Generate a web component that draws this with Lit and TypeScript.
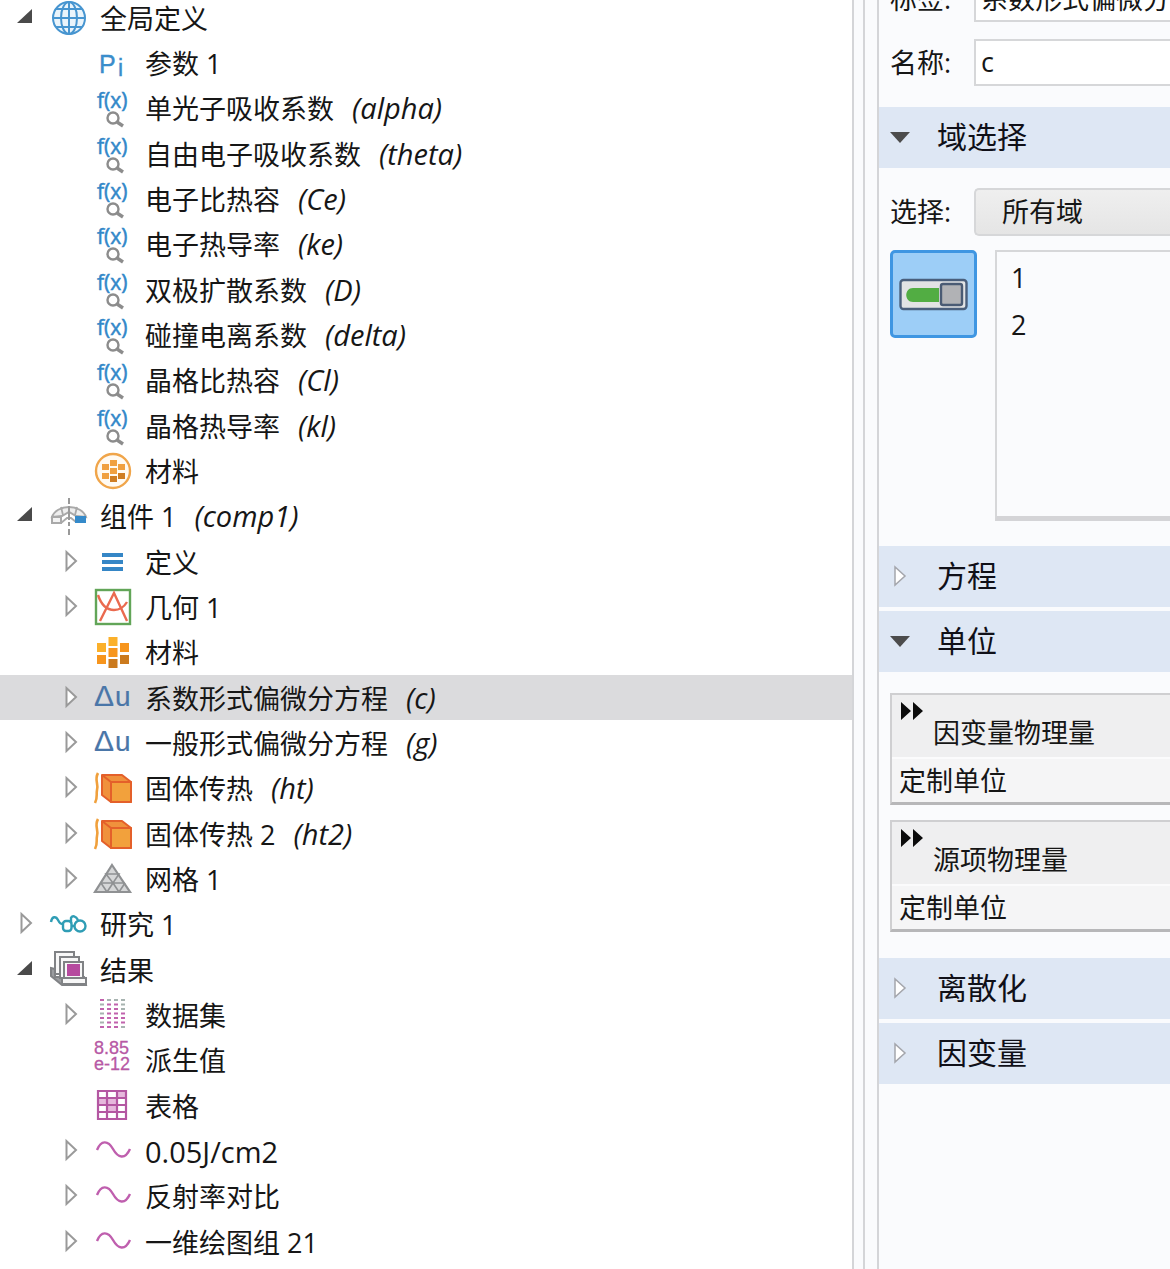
import { LitElement, html, svg, css, nothing, SVGTemplateResult } from "lit";
import { customElement, property, state } from "lit/decorators.js";
import { classMap } from "lit/directives/class-map.js";

interface TreeNode {
  icon: string;
  label: string;
  tag?: string;
  level: 0 | 1;
  expand?: "open" | "closed";
  latin?: boolean;
}

const NODES: TreeNode[] = [
  { level: 0, expand: "open", icon: "globe", label: "全局定义" },
  { level: 1, icon: "param", label: "参数 1" },
  { level: 1, icon: "func", label: "单光子吸收系数", tag: "(alpha)" },
  { level: 1, icon: "func", label: "自由电子吸收系数", tag: "(theta)" },
  { level: 1, icon: "func", label: "电子比热容", tag: "(Ce)" },
  { level: 1, icon: "func", label: "电子热导率", tag: "(ke)" },
  { level: 1, icon: "func", label: "双极扩散系数", tag: "(D)" },
  { level: 1, icon: "func", label: "碰撞电离系数", tag: "(delta)" },
  { level: 1, icon: "func", label: "晶格比热容", tag: "(Cl)" },
  { level: 1, icon: "func", label: "晶格热导率", tag: "(kl)" },
  { level: 1, icon: "materialsGlobal", label: "材料" },
  { level: 0, expand: "open", icon: "component", label: "组件 1", tag: "(comp1)" },
  { level: 1, expand: "closed", icon: "definitions", label: "定义" },
  { level: 1, expand: "closed", icon: "geometry", label: "几何 1" },
  { level: 1, icon: "materials", label: "材料" },
  { level: 1, expand: "closed", icon: "pde", label: "系数形式偏微分方程", tag: "(c)" },
  { level: 1, expand: "closed", icon: "pde", label: "一般形式偏微分方程", tag: "(g)" },
  { level: 1, expand: "closed", icon: "heat", label: "固体传热", tag: "(ht)" },
  { level: 1, expand: "closed", icon: "heat", label: "固体传热 2", tag: "(ht2)" },
  { level: 1, expand: "closed", icon: "mesh", label: "网格 1" },
  { level: 0, expand: "closed", icon: "study", label: "研究 1" },
  { level: 0, expand: "open", icon: "results", label: "结果" },
  { level: 1, expand: "closed", icon: "datasets", label: "数据集" },
  { level: 1, icon: "derived", label: "派生值" },
  { level: 1, icon: "table", label: "表格" },
  { level: 1, expand: "closed", icon: "plot", label: "0.05J/cm2", latin: true },
  { level: 1, expand: "closed", icon: "plot", label: "反射率对比" },
  { level: 1, expand: "closed", icon: "plot", label: "一维绘图组 21" },
];

const DATASET_COLS = [7, 14, 21, 28];
const DATASET_ROWS = [0, 1, 2, 3, 4, 5, 6];
const DATASET_PINK = ["1000", "0110", "1110", "0111", "1111", "0111", "1110"];

const ICONS: Record<string, SVGTemplateResult> = {
  globe: svg`<g fill="none" stroke="#4795d0" stroke-width="2">
    <circle cx="21" cy="23" r="16" fill="#eaf4fb"/>
    <ellipse cx="21" cy="23" rx="8" ry="16"/>
    <path d="M21 7V39M5 23H37M8 14H34M8 32H34"/></g>`,
  param: svg`<g fill="#3a8dcb" stroke="#3a8dcb" stroke-width=".4"><text x="6" y="33" font-size="25">P</text><text x="25" y="36" font-size="23">i</text></g>`,
  func: svg`<text class="formula" x="4" y="23" font-size="21" fill="#3288c9" stroke="#3288c9" stroke-width=".5">f(x)</text>
    <circle cx="20" cy="33" r="5.5" fill="#fff" stroke="#8c8c8c" stroke-width="2.4"/>
    <path d="M24 37L30 41" stroke="#8c8c8c" stroke-width="3.4"/>`,
  materialsGlobal: svg`<circle cx="20" cy="23" r="17" fill="#fffaf2" stroke="#f0a54a" stroke-width="2.4"/>
    <g fill="#f0a040"><path d="M17 12h7v6h-7zM9 16h7v6H9zM25 16h7v6h-7zM17 20h7v6h-7zM9 25h7v6H9z"/>
    <path fill="#cf7d22" d="M17 28h7v6h-7zM25 25h7v6h-7z"/></g>`,
  component: svg`<path d="M4 24C6 18 13 14 21 14S36 18 38 24L28 23L21 19L14 23Z" fill="#eee" stroke="#a9a9a9" stroke-width="2"/>
    <path d="M4 24h9v6H4z" fill="#f3f3f3" stroke="#a9a9a9" stroke-width="2"/>
    <path d="M13 14L15 22M29 14L27 22M13 30L19 25H23L28 29" fill="none" stroke="#a9a9a9" stroke-width="1.8"/>
    <path d="M27 23h11v7H27z" fill="#358aca"/>
    <path d="M21 5v6M21 13v14M21 29v4M21 36v6" stroke="#999" stroke-width="2"/>`,
  definitions: svg`<path d="M9 14h21v4H9zM9 21h21v4H9zM9 28h21v4H9z" fill="#3586c6"/>`,
  geometry: svg`<rect x="3" y="6" width="34" height="34" fill="#fff" stroke="#62a558" stroke-width="2.4"/>
    <g fill="none" stroke="#ea6a4f" stroke-width="2.4"><path d="M7 37L21 9L34 37"/>
    <path d="M5 11C8 20 13 26 21 26C27 26 31 23 34 18"/></g>`,
  materials: svg`<g fill="#f7951d"><path fill="#fbb02a" d="M15.500 8h9v9h-9zM4 14h9v9H4z"/>
    <path d="M27 14h9v9h-9zM15.500 19h9v9h-9zM4 26h9v9H4z"/>
    <path fill="#cb7a1e" d="M27 26h9v9h-9zM15.500 30h9v9h-9z"/></g>`,
  pde: svg`<g fill="#4a76a8" stroke="#4a76a8" stroke-width=".2"><text x="1" y="31" font-size="30">Δ</text><text x="22" y="31" font-size="28">u</text></g>`,
  heat: svg`<g stroke="#e4602a" stroke-width="2" stroke-linejoin="round">
    <path d="M9 10H29L38 17V37H18L9 30Z" fill="#f0913c"/><path d="M18 17H38V37H18Z" fill="#f2a13c"/><path d="M9 10L18 17" fill="none"/></g>
    <path d="M5 8C1 15 6 19 4 25C3 30 5 32 2 38" fill="none" stroke="#f0a03c" stroke-width="2.6"/>`,
  mesh: svg`<path d="M19 9L37 36H2Z" fill="#d6d7d8" stroke="#8f9193" stroke-width="2.2"/>
    <g fill="none" stroke="#8f9193" stroke-width="1.6"><path d="M13 18H26L20 27ZM7 27H32M14 36L20 27L26 36M8 27L14 36M32 27L26 36"/></g>`,
  study: svg`<g fill="none" stroke="#2f9db5" stroke-width="2.4"><path d="M3 21C4 15 8 15 10 19S13 23 16 23M23 22V17C24 14 28 15 30 19M23 25h4"/>
    <rect x="15" y="20" width="8.500" height="10" rx="3"/><circle cx="32" cy="25" r="5.5"/></g>`,
  results: svg`<g fill="#f7f7f7" stroke="#808285" stroke-width="2">
    <path d="M3 21L7 22V30H36L38 38H14L3 29Z" fill="#9b9da0"/>
    <path d="M7 5H26V27H7Z"/><path d="M12 10H31V31H12Z"/><path d="M16 15H35V32H16Z"/>
    <path d="M14 31H38V37H14Z"/></g><path d="M19 17H32V29H19Z" fill="#b64a9f"/>`,
  datasets: svg`${DATASET_ROWS.map((r) =>
    DATASET_COLS.map(
      (x, c) => svg`<rect x=${x} y=${7 + r * 4.5} width="4" height="2" fill=${DATASET_PINK[r][c] === "1" ? "#c163ad" : "#a7b3b0"}/>`
    )
  )}`,
  derived: svg`<g fill="#b759a5" stroke="#b759a5" stroke-width=".3"><text x="1" y="17" font-size="18">8.85</text><text x="1" y="33" font-size="18">e-12</text></g>`,
  table: svg`<path d="M5 8H33V36H5Z" fill="#fff"/><path d="M24 8h9v7h-9zM5 15h9v7H5zM14 15h10v14H14z" fill="#e6b8dc"/>
    <path d="M5 8H33V36H5ZM14 8V36M24 8V36M5 15H33M5 22H33M5 29H33" fill="none" stroke="#b457a2" stroke-width="2.2"/>`,
  plot: svg`<path d="M4 22C8 12 15 12 20 21S32 32 37 21" fill="none" stroke="#bf5fae" stroke-width="2.4"/>`,
};

@customElement("model-tree")
class ModelTree extends LitElement {
  @state() private selected = 15;

  static styles = css`
    :host { display: block; overflow: hidden; }
    .tree { list-style: none; margin: -5px 0 0; padding: 0; }
    .row {
      display: flex; align-items: flex-start; height: 45px; padding-left: 14px;
      box-sizing: border-box; white-space: nowrap; cursor: default;
    }
    .row:nth-child(3n) { height: 46px; }
    .row.child { padding-left: 59px; }
    .row.selected { background: #dbdbdd; }
    .expander {
      width: 22px; height: 44px; margin-right: 12px; padding: 0; border: 0;
      background: none; flex: none; display: block;
    }
    .arrow { display: block; }
    .icon { flex: none; width: 40px; height: 44px; margin-right: 12px; overflow: visible; font-family: "Liberation Sans", sans-serif; }
    .formula { font-family: "Open Sans", sans-serif; }
    .label { line-height: 48px; }
    .label.latin { font-size: 29px; }
    .tag { font-size: 29px; font-style: italic; margin-left: 18px; line-height: 46px; }
  `;

  private expander(node: TreeNode) {
    if (!node.expand) return html`<span class="expander"></span>`;
    return html`<button class="expander" tabindex="-1" aria-label=${node.label}>
      <svg class="arrow" width="22" height="44" viewBox="0 0 22 44" aria-hidden="true">
        ${node.expand === "open"
          ? svg`<path d="M18 14V28H3Z" fill="#4a4a4a"/>`
          : svg`<path d="M7.500 13V31L17 22Z" fill="#fff" stroke="#9a9a9a" stroke-width="2"/>`}
      </svg>
    </button>`;
  }

  render() {
    return html`<ul class="tree" role="tree">
      ${NODES.map(
        (n, i) => html`<li
          class=${classMap({ row: true, child: n.level === 1, selected: i === this.selected })}
          role="treeitem"
          aria-level=${n.level + 1}
          aria-selected=${i === this.selected}
          @click=${() => (this.selected = i)}
        >${this.expander(n)}<svg class="icon" viewBox="0 0 40 44" aria-hidden="true">${ICONS[n.icon]}</svg><span
            class=${classMap({ label: true, latin: !!n.latin })}>${n.label}</span>${n.tag
            ? html`<span class="tag">${n.tag}</span>`
            : nothing}</li>`
      )}
    </ul>`;
  }
}

@customElement("settings-section")
class SettingsSection extends LitElement {
  @property() heading = "";
  @property({ type: Boolean }) open = false;

  static styles = css`
    :host { display: block; }
    .head {
      display: flex; align-items: center; width: 100%; height: 61px; padding: 0 0 2px 10px;
      border: 0; background: #dee7f4; font: inherit; font-size: 30px; line-height: 44px;
      color: #101018; text-align: left; white-space: nowrap;
    }
    .mark { flex: none; margin-right: 26px; }
  `;

  render() {
    return html`<button class="head" aria-expanded=${this.open} @click=${() => (this.open = !this.open)}>
        <svg class="mark" width="22" height="24" viewBox="0 0 22 24" aria-hidden="true">
          ${this.open
            ? svg`<path d="M1 7H21L11 18Z" fill="#4c4c4c"/>`
            : svg`<path d="M6 3V21L16 12Z" fill="#fff" stroke="#a4a6ac" stroke-width="1.500"/>`}
        </svg>
        <span>${this.heading}</span>
      </button>
      ${this.open ? html`<slot></slot>` : nothing}`;
  }
}

@customElement("app-root")
class AppRoot extends LitElement {
  static styles = css`
    :host {
      display: flex; height: 100vh; overflow: hidden; background: #fafbfd; color: #161616;
      font-family: "Open Sans", "Noto Sans CJK SC", sans-serif; font-size: 27px; line-height: 40px;
    }
    .model { flex: 0 0 73%; box-sizing: border-box; border-right: 2px solid #d4d5d8; background: #fff; }
    .splitter { flex: none; width: 9px; margin-right: 12px; border-right: 2px solid #d4d5d8; }
    .settings { flex: 1; min-width: 0; overflow: hidden; border-left: 2px solid #d4d5d8; }
    .identity { display: grid; gap: 17px; margin-top: -25px; padding: 0 0 21px 11px; }
    .field { display: flex; align-items: center; white-space: nowrap; }
    .name { flex: none; width: 84px; }
    .text, .choice {
      flex: 1; min-width: 0; height: 47px; box-sizing: border-box; margin: 0; border: 2px solid #d6d7d9;
      border-right: 0; border-radius: 0; background: #fff; color: inherit; font: inherit; outline: none;
    }
    .text { padding: 0 0 2px 5px; }
    .choice {
      appearance: none; height: 48px; padding: 0 0 0 26px; border-radius: 5px 0 0 5px;
      background: linear-gradient(#efefef, #e5e5e5);
    }
    .domain { padding: 20px 0 25px 11px; }
    .picker { display: flex; align-items: flex-start; gap: 18px; margin-top: 14px; }
    .toggle {
      flex: none; width: 87px; height: 88px; padding: 0; border: 3px solid #3f96e2; border-radius: 5px;
      background: #9dcef7; display: grid; place-items: center;
    }
    .domains {
      flex: 1; list-style: none; margin: 0; padding: 2px 0 0 14px; height: 271px; box-sizing: border-box;
      border: 2px solid #d6d7d9; border-right: 0; border-bottom: 5px solid #d4d4d7;
    }
    .domains li { height: 47px; line-height: 47px; }
    .gap { margin-top: 4px; }
    .units { display: grid; gap: 15px; padding: 21px 0 26px 11px; }
    .unit {
      width: 100%; border-collapse: separate; border-spacing: 0; border: 2px solid #cfcfd1; border-right: 0;
      border-bottom: 3px solid #b7b7b9; background: #f5f5f6; font-weight: 400; text-align: left;
      white-space: nowrap; table-layout: fixed;
    }
    .unit th { padding: 0; height: 64px; box-sizing: border-box; font-weight: 400; background: #efeff0; border-bottom: 2px solid #fbfbfc; vertical-align: top; }
    .unit td { padding: 0 0 0 7px; height: 43px; box-sizing: border-box; }
    .quantity { display: flex; align-items: flex-start; gap: 10px; padding: 7px 0 0 9px; height: 55px; box-sizing: border-box; }
    .quantity span { padding-top: 13px; line-height: 36px; }
  `;

  private unit(quantity: string, value: string) {
    return html`<table class="unit">
      <tr><th scope="col"><div class="quantity">
        <svg width="22" height="19" viewBox="0 0 22 19" aria-hidden="true"><path d="M0 0L10 9L0 18ZM12 0L22 9L12 18Z" fill="#0c0c0c"/></svg>
        <span>${quantity}</span></div></th></tr>
      <tr><td>${value}</td></tr>
    </table>`;
  }

  render() {
    return html`
      <model-tree class="model"></model-tree>
      <div class="splitter"></div>
      <main class="settings">
        <div class="identity">
          <div class="field"><label class="name" for="tag">标签:</label><input class="text" id="tag" value="系数形式偏微分方程"></div>
          <div class="field"><label class="name" for="name">名称:</label><input class="text" id="name" value="c"></div>
        </div>
        <settings-section heading="域选择" open>
          <div class="domain">
            <div class="field"><label class="name" for="scope">选择:</label>
              <select class="choice" id="scope"><option>所有域</option></select></div>
            <div class="picker">
              <button class="toggle" aria-label="激活选择" aria-pressed="true">
                <svg width="69" height="33" viewBox="0 0 69 33" aria-hidden="true">
                  <rect x="1.500" y="2" width="66" height="29" rx="3" fill="#e2e3e4" stroke="#4a5f7c" stroke-width="2.400"/>
                  <path d="M40 10V24H14C5 24 5 10 14 10Z" fill="#52ad43"/>
                  <rect x="42" y="6" width="21" height="21" rx="2" fill="#b1b2b5" stroke="#4a5b74" stroke-width="2.400"/>
                </svg>
              </button>
              <ul class="domains"><li>1</li><li>2</li></ul>
            </div>
          </div>
        </settings-section>
        <settings-section heading="方程"></settings-section>
        <settings-section class="gap" heading="单位" open>
          <div class="units">
            ${this.unit("因变量物理量", "定制单位")}
            ${this.unit("源项物理量", "定制单位")}
          </div>
        </settings-section>
        <settings-section heading="离散化"></settings-section>
        <settings-section class="gap" heading="因变量"></settings-section>
      </main>`;
  }
}
